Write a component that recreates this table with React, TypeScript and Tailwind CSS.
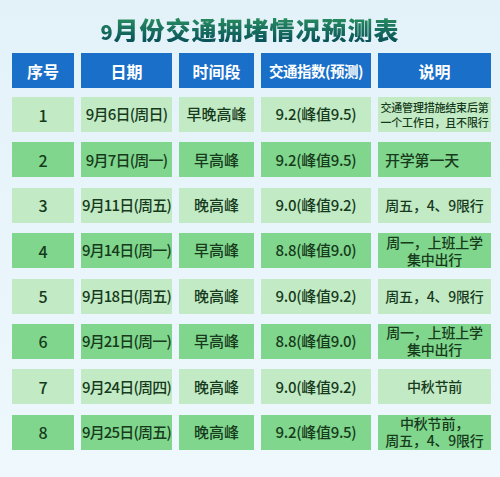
import React from "react";

type Row = {
  no: string;
  date: string;
  period: string;
  index: string;
  note: React.ReactNode;
  noteAlign?: "left" | "center";
  noteSize?: string;
};

const rows: Row[] = [
  {
    no: "1",
    date: "9月6日(周日)",
    period: "早晚高峰",
    index: "9.2(峰值9.5)",
    note: (
      <>
        交通管理措施结束后第
        <br />
        一个工作日，且不限行
      </>
    ),
    noteSize: "text-[11px] leading-[15px]",
  },
  { no: "2", date: "9月7日(周一)", period: "早高峰", index: "9.2(峰值9.5)", note: "开学第一天", noteAlign: "left" },
  { no: "3", date: "9月11日(周五)", period: "晚高峰", index: "9.0(峰值9.2)", note: "周五，4、9限行" },
  {
    no: "4",
    date: "9月14日(周一)",
    period: "早高峰",
    index: "8.8(峰值9.0)",
    note: (
      <>
        周一，上班上学
        <br />
        集中出行
      </>
    ),
  },
  { no: "5", date: "9月18日(周五)", period: "晚高峰", index: "9.0(峰值9.2)", note: "周五，4、9限行" },
  {
    no: "6",
    date: "9月21日(周一)",
    period: "早高峰",
    index: "8.8(峰值9.0)",
    note: (
      <>
        周一，上班上学
        <br />
        集中出行
      </>
    ),
  },
  { no: "7", date: "9月24日(周四)", period: "晚高峰", index: "9.0(峰值9.2)", note: "中秋节前" },
  {
    no: "8",
    date: "9月25日(周五)",
    period: "晚高峰",
    index: "9.2(峰值9.5)",
    note: (
      <>
        中秋节前，
        <br />
        周五，4、9限行
      </>
    ),
  },
];

const heads = ["序号", "日期", "时间段", "交通指数(预测)", "说明"];

const cols = "grid grid-cols-[62px_91px_75px_110px_113px] gap-x-[7px]";

export default function App() {
  return (
    <main
      className="w-[500px] h-[477px] overflow-hidden bg-gradient-to-b from-[#e3f2f9] to-[#eef8fd] pl-[12px]"
      style={{ fontFamily: '"Noto Sans CJK SC", "Noto Sans", sans-serif' }}
    >
      {/* title */}
      <h1 className="h-[53px] flex items-center justify-center pr-[12px] pt-[6px]">
        <span className="text-[25px] font-black tracking-[1px] bg-gradient-to-b from-[#2a8f5e] to-[#0a525a] bg-clip-text text-transparent leading-none">
          <span className="text-[20px]">9</span>月份交通拥堵情况预测表
        </span>
      </h1>

      {/* header */}
      <div className={cols}>
        {heads.map((h) => (
          <div
            key={h}
            className={`h-[35px] bg-[#1a6fc9] text-white font-bold flex items-center justify-center ${
              h.length > 4 ? "text-[14.5px] tracking-[-0.5px]" : "text-[16px]"
            }`}
          >
            {h}
          </div>
        ))}
      </div>

      {/* body */}
      <div className="mt-[9px] flex flex-col gap-y-[10.4px]">
        {rows.map((r, i) => {
          const bg = i % 2 === 0 ? "bg-[#c2ebc5]" : "bg-[#7fd68c]";
          const cell = `h-[35px] ${bg} flex items-center justify-center text-[#173a1c] text-[15px] font-medium`;
          return (
            <div key={r.no} className={cols}>
              <div className={`${cell} text-[16px]`}>{r.no}</div>
              <div className={`${cell} tracking-[-0.8px]`}>{r.date}</div>
              <div className={cell}>{r.period}</div>
              <div className={`${cell} tracking-[-0.3px]`}>{r.index}</div>
              <div
                className={`${bg} h-[35px] flex items-center text-[#173a1c] font-medium ${
                  r.noteAlign === "left" ? "justify-start pl-[7px] text-[15px]" : "justify-center text-center"
                } ${r.noteSize ?? "text-[14px] leading-[17px]"} tracking-[-0.2px]`}
              >
                <span>{r.note}</span>
              </div>
            </div>
          );
        })}
      </div>
    </main>
  );
}
